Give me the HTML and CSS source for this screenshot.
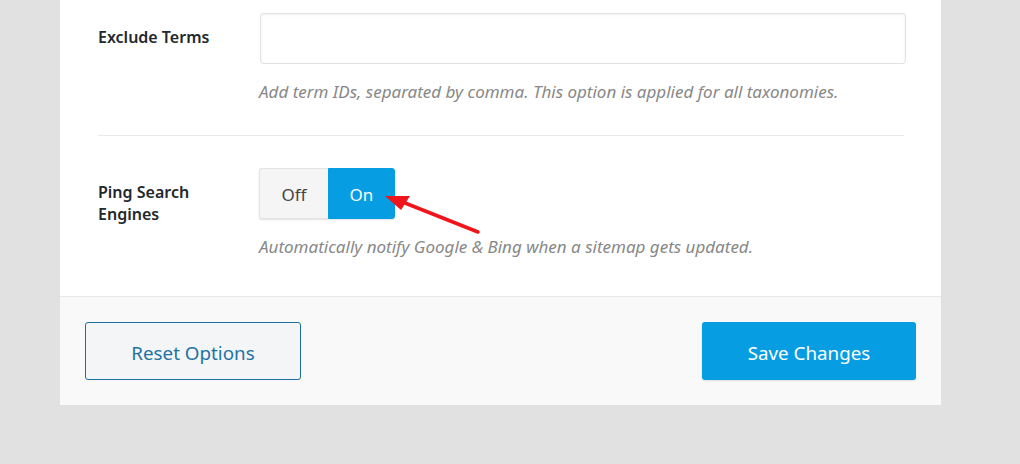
FILE: index.html
```html
<!DOCTYPE html>
<html lang="en">
<head>
  <meta charset="UTF-8" />
  <title>Sitemap Settings</title>
  <link rel="stylesheet" href="styles.css">
</head>
<body>
  <div class="panel">
    <div class="panel-body">
      <div class="field">
        <label class="field-label" for="exclude">Exclude Terms</label>
        <div class="field-control">
          <input type="text" id="exclude" class="text-input" />
          <p class="desc">Add term IDs, separated by comma. This option is applied for all taxonomies.</p>
        </div>
      </div>

      <div class="field">
        <div class="field-label">Ping Search Engines</div>
        <div class="field-control">
          <div class="toggle">
            <button class="toggle-btn">Off</button>
            <button class="toggle-btn active">On</button>
          </div>
          <p class="desc">Automatically notify Google &amp; Bing when a sitemap gets updated.</p>
        </div>
      </div>
    </div>

    <div class="panel-footer">
      <button class="btn btn-reset">Reset Options</button>
      <button class="btn btn-save">Save Changes</button>
    </div>
  </div>

  <svg class="arrow" width="1020" height="464" viewBox="0 0 1020 464">
    <line x1="478" y1="232" x2="400" y2="201" stroke="#f0141b" stroke-width="3.5" stroke-linecap="round" />
    <polygon points="385,196 410,196 401,210" fill="#f0141b" />
  </svg>
</body>
</html>
```

FILE: styles.css
```css
html, body {
  margin: 0;
  padding: 0;
  height: 100%;
  background: #e1e1e1;
  font-family: 'Noto Sans', 'Open Sans', sans-serif;
  color: #23282d;
  position: relative;
}

.panel {
  width: 881px;
  margin-left: 60px;
  background: #fff;
}

.panel-body {
  padding: 0 36px 0 38px;
}

.field {
  display: grid;
  grid-template-columns: 161px 1fr;
  padding: 13px 0 31px;
}

.field + .field {
  border-top: 1px solid #e9e9e9;
  padding-top: 32px;
  padding-bottom: 37px;
  margin-right: 1px;
}

.field-label {
  display: block;
  font-size: 16px;
  font-weight: 600;
  line-height: 22px;
  padding-top: 13px;
  padding-right: 40px;
}

.text-input {
  display: block;
  width: 100%;
  height: 51px;
  box-sizing: border-box;
  border: 1px solid #e2e2e2;
  border-radius: 3px;
  box-shadow: inset 0 1px 3px rgba(0,0,0,0.06);
  margin-left: 1px;
}

.desc {
  margin: 16px 0 0;
  font-size: 17px;
  line-height: 24px;
  font-style: italic;
  color: #888;
}

.toggle {
  display: flex;
  width: 136px;
  height: 51px;
  border-radius: 3px;
  box-shadow: 0 1px 2px rgba(0,0,0,0.12);
}

.toggle-btn {
  flex: 1;
  border: 1px solid #e3e3e3;
  background: #f5f5f5;
  font-family: inherit;
  font-size: 17px;
  color: #444;
  padding: 2px 0 0;
  cursor: pointer;
}

.toggle-btn:first-child {
  border-radius: 3px 0 0 3px;
  border-right: none;
  flex: 0 0 69px;
}

.toggle-btn.active {
  background: #069de3;
  border-color: #069de3;
  color: #fff;
  border-radius: 0 3px 3px 0;
}

.panel-footer {
  display: flex;
  justify-content: space-between;
  padding: 25px;
  background: #f9f9f9;
  border-top: 1px solid #e8e8e8;
}

.btn {
  height: 58px;
  border-radius: 3px;
  font-family: inherit;
  font-size: 18.8px;
  padding: 3px 0 0;
  cursor: pointer;
}

.btn-reset {
  width: 216px;
  background: #f3f5f6;
  border: 1px solid #1a6f9c;
  color: #1f73a3;
}

.btn-save {
  width: 214px;
  background: #069de3;
  border: none;
  color: #fff;
  box-shadow: 0 1px 2px rgba(0,0,0,0.1);
}

.arrow {
  position: absolute;
  top: 0;
  left: 0;
  pointer-events: none;
}
```
